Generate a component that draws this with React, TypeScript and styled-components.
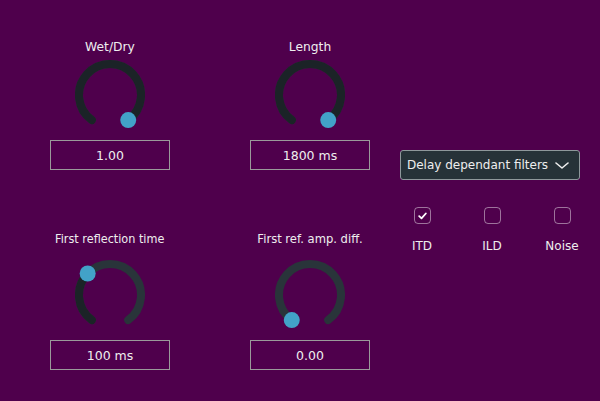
import React from 'react'
import styled, { createGlobalStyle } from 'styled-components'

const GlobalStyle = createGlobalStyle`
  html, body {
    margin: 0;
    padding: 0;
    background: #4f004c;
  }
  body {
    font-family: 'DejaVu Sans', 'Liberation Sans', sans-serif;
    color: #eeeeee;
  }
`

const Page = styled.div`
  width: 600px;
  height: 401px;
  background: #4f004c;
  display: flex;
  padding-left: 50px;
  box-sizing: border-box;
  overflow: hidden;
`

const KnobGrid = styled.div`
  display: grid;
  grid-template-columns: 120px 120px;
  grid-template-rows: 170px 200px;
  column-gap: 80px;
`

const KnobCell = styled.div<{ top: number; labelGap: number }>`
  display: flex;
  flex-direction: column;
  align-items: center;
  padding-top: ${({ top }) => top}px;
  gap: ${({ labelGap }) => labelGap}px;
`

// long labels get squeezed horizontally to fit, like the plugin does
const KnobLabel = styled.div<{ squeeze: number }>`
  height: 20px;
  line-height: 20px;
  font-size: 12.3px;
  white-space: nowrap;
  text-align: center;
  transform: scaleX(${({ squeeze }) => squeeze});
`

const KnobBody = styled.div`
  display: flex;
  flex-direction: column;
  align-items: center;
  gap: 10px;
`

const ValueBox = styled.div`
  width: 120px;
  height: 30px;
  box-sizing: border-box;
  border: 1px solid #9a9a9a;
  display: flex;
  align-items: center;
  justify-content: center;
  font-size: 12.5px;
`

const SidePanel = styled.div`
  margin-left: 17px;
  padding-top: 150px;
  display: flex;
  flex-direction: column;
  align-items: flex-start;
`

const ComboBox = styled.div`
  margin-left: 13px;
  width: 180px;
  height: 30px;
  box-sizing: border-box;
  border: 1px solid #8e989b;
  border-radius: 3px;
  background: #263238;
  display: flex;
  align-items: center;
  gap: 7px;
  padding: 0 0 0 6px;
  font-size: 12px;
`

const ToggleRow = styled.div`
  margin-top: 27px;
  display: grid;
  grid-template-columns: repeat(3, 70px);
`

const Toggle = styled.div`
  display: flex;
  flex-direction: column;
  align-items: center;
  gap: 14px;
`

const TickBox = styled.div`
  width: 17px;
  height: 17px;
  box-sizing: border-box;
  border: 1px solid rgba(255, 255, 255, 0.45);
  border-radius: 4px;
  display: flex;
  align-items: center;
  justify-content: center;
`

const ToggleLabel = styled.div`
  font-size: 12px;
  line-height: 16px;
`

const START = -144
const END = 144
const R = 31

function point(angle: number) {
  const a = (angle * Math.PI) / 180
  return { x: 35 + R * Math.sin(a), y: 35 - R * Math.cos(a) }
}

function arc(from: number, to: number) {
  const p0 = point(from)
  const p1 = point(to)
  const large = to - from > 180 ? 1 : 0
  return `M ${p0.x} ${p0.y} A ${R} ${R} 0 ${large} 1 ${p1.x} ${p1.y}`
}

function Knob({ value }: { value: number }) {
  const angle = START + (END - START) * value
  const thumb = point(angle)
  return (
    <svg width="70" height="70" viewBox="0 0 70 70">
      <path d={arc(START, END)} stroke="#29343a" strokeWidth="8" fill="none" strokeLinecap="round" />
      {value > 0 && (
        <path d={arc(START, angle)} stroke="#1b2327" strokeWidth="8" fill="none" strokeLinecap="round" />
      )}
      <circle cx={thumb.x} cy={thumb.y} r="8" fill="#42a2c8" />
    </svg>
  )
}

const knobs = [
  { label: 'Wet/Dry', value: 1, text: '1.00', top: 37, gap: 3, squeeze: 1 },
  { label: 'Length', value: 1, text: '1800 ms', top: 37, gap: 3, squeeze: 1 },
  { label: 'First reflection time', value: 0.34, text: '100 ms', top: 59, gap: 11, squeeze: 0.915 },
  { label: 'First ref. amp. diff.', value: 0, text: '0.00', top: 59, gap: 11, squeeze: 0.94 },
]

const toggles = [
  { label: 'ITD', on: true },
  { label: 'ILD', on: false },
  { label: 'Noise', on: false },
]

export default function App() {
  return (
    <>
      <GlobalStyle />
      <Page>
        <KnobGrid>
          {knobs.map(k => (
            <KnobCell key={k.label} top={k.top} labelGap={k.gap}>
              <KnobLabel squeeze={k.squeeze}>{k.label}</KnobLabel>
              <KnobBody>
                <Knob value={k.value} />
                <ValueBox>{k.text}</ValueBox>
              </KnobBody>
            </KnobCell>
          ))}
        </KnobGrid>
        <SidePanel>
          <ComboBox>
            <span>Delay dependant filters</span>
            <svg width="14" height="7" viewBox="0 0 14 7">
              <path d="M1 1 L7 6 L13 1" stroke="#eeeeee" strokeWidth="1.6" fill="none" strokeLinecap="round" strokeLinejoin="round" />
            </svg>
          </ComboBox>
          <ToggleRow>
            {toggles.map(t => (
              <Toggle key={t.label}>
                <TickBox>
                  {t.on && (
                    <svg width="9" height="8" viewBox="0 0 9 8">
                      <path d="M1.2 4.2 L3.5 6.3 L7.8 1.5" stroke="#ffffff" strokeWidth="1.8" fill="none" strokeLinecap="round" strokeLinejoin="round" />
                    </svg>
                  )}
                </TickBox>
                <ToggleLabel>{t.label}</ToggleLabel>
              </Toggle>
            ))}
          </ToggleRow>
        </SidePanel>
      </Page>
    </>
  )
}
